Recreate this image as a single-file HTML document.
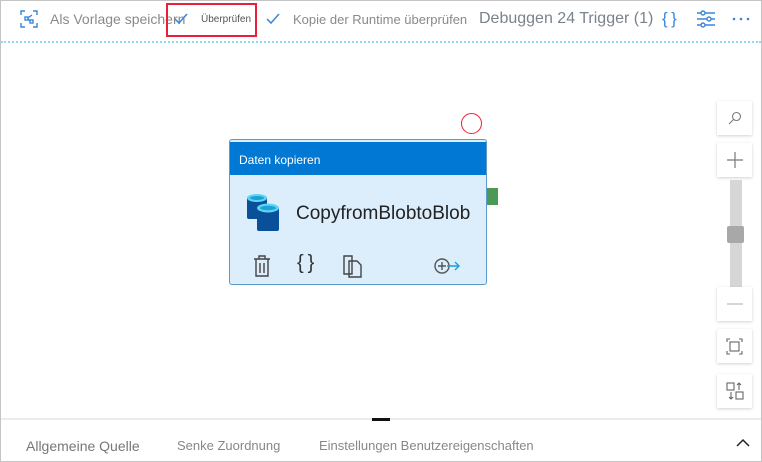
<!DOCTYPE html>
<html><head><style>
*{margin:0;padding:0;box-sizing:border-box}
body{width:762px;height:462px;overflow:hidden;background:#fff;font-family:"Liberation Sans",sans-serif;position:relative}
.frame{position:absolute;inset:0;border:1px solid #c4c4c4}
.a{position:absolute;white-space:nowrap}
.btn{position:absolute;left:717px;width:35px;height:34px;background:#fff;box-shadow:0 1px 3px rgba(0,0,0,.18);display:flex;align-items:center;justify-content:center}
</style></head><body>
<div class="frame"></div>
<!-- toolbar -->
<svg class="a" style="left:20px;top:10px" width="18" height="18" viewBox="0 0 18 18" fill="none" stroke="#3a86d8" stroke-width="1.4"><path d="M1 5V1h4M13 1h4v4M17 13v4h-4M5 17H1v-4"/><rect x="5" y="7" width="3" height="3"/><rect x="10" y="10" width="3" height="3"/><path d="M8 8l4-3M8 9l2 2"/></svg>
<div class="a" style="left:50px;top:11px;font-size:14px;color:#8a8a8a">Als Vorlage speichern</div>
<svg class="a" style="left:173px;top:12px" width="16" height="14" viewBox="0 0 16 14"><path d="M2 7l4 4 8-9" fill="none" stroke="#3a86d8" stroke-width="1.5"/></svg>
<div class="a" style="left:166px;top:3px;width:91px;height:34px;border:2px solid #e8203a"></div>
<div class="a" style="left:201px;top:14px;font-size:10px;color:#555">Überprüfen</div>
<svg class="a" style="left:265px;top:12px" width="16" height="14" viewBox="0 0 16 14"><path d="M2 7l4 4 8-9" fill="none" stroke="#3a86d8" stroke-width="1.5"/></svg>
<div class="a" style="left:293px;top:12px;font-size:13px;color:#8a8a8a">Kopie der Runtime überprüfen</div>
<div class="a" style="left:479px;top:10px;font-size:16px;color:#7a828c">Debuggen 24 Trigger (1)</div>
<div class="a" style="left:662px;top:9px;font-size:17px;color:#3a86d8">{&thinsp;}</div>
<svg class="a" style="left:696px;top:10px" width="20" height="18" viewBox="0 0 20 18" fill="none" stroke="#3a86d8" stroke-width="1.4"><path d="M1 3h18M1 9h18M1 15h18"/><circle cx="7" cy="3" r="2" fill="#fff"/><circle cx="13" cy="9" r="2" fill="#fff"/><circle cx="7" cy="15" r="2" fill="#fff"/></svg>
<svg class="a" style="left:732px;top:17px" width="20" height="4" viewBox="0 0 20 4" fill="#3a86d8"><circle cx="2" cy="2" r="1.3"/><circle cx="9" cy="2" r="1.3"/><circle cx="16" cy="2" r="1.3"/></svg>
<div class="a" style="left:1px;top:41px;width:760px;border-top:2px dotted #8fdcf0"></div>
<!-- node -->
<div class="a" style="left:461px;top:113px;width:21px;height:21px;border:1.5px solid #e8203a;border-radius:50%"></div>
<div class="a" style="left:487px;top:188px;width:11px;height:17px;background:#4a9a55"></div>
<div class="a" style="left:229px;top:139px;width:258px;height:146px;background:#dcedfc;border:1px solid #5a9ac8;border-radius:3px;overflow:hidden">
 <div style="position:absolute;left:0;top:2px;width:100%;height:33px;background:#0078d4;color:#fff;font-size:12px;padding:11px 0 0 9px">Daten kopieren</div>
 <svg style="position:absolute;left:16px;top:53px" width="36" height="40" viewBox="0 0 36 40"><rect x="1" y="4" width="20" height="22" rx="2" fill="#0a4f9a"/><ellipse cx="11" cy="5" rx="10" ry="4" fill="#5bd6f0"/><ellipse cx="11" cy="5" rx="7" ry="2" fill="#1e9fd8"/><rect x="11" y="14" width="22" height="24" rx="2" fill="#0a4f9a"/><ellipse cx="22" cy="15" rx="11" ry="4.5" fill="#5bd6f0"/><ellipse cx="22" cy="15" rx="8" ry="2.2" fill="#1e9fd8"/></svg>
 <div style="position:absolute;left:66px;top:63px;font-size:19px;color:#222">CopyfromBlobtoBlob</div>
 <svg style="position:absolute;left:22px;top:114px" width="20" height="24" viewBox="0 0 20 24" fill="none" stroke="#444" stroke-width="1.4"><path d="M2 5h16M7 5V2h6v3M4 5v17h12V5M8 9v10M12 9v10"/></svg>
 <div style="position:absolute;left:67px;top:112px;font-size:20px;color:#333">{&thinsp;}</div>
 <svg style="position:absolute;left:112px;top:114px" width="22" height="24" viewBox="0 0 22 24" fill="none" stroke="#444" stroke-width="1.4"><path d="M2 2h8v18H2z"/><path d="M7 7h8l4 4v12H7z"/></svg>
 <svg style="position:absolute;left:203px;top:117px" width="28" height="18" viewBox="0 0 28 18" fill="none" stroke-width="1.4"><circle cx="9" cy="9" r="7" stroke="#555"/><path d="M9 5v8M5 9h8" stroke="#555"/><path d="M14 9h12M22 5l4 4-4 4" stroke="#1e9fd8"/></svg>
</div>
<!-- right controls -->
<div class="btn" style="top:101px"><svg width="14" height="14" viewBox="0 0 14 14" fill="none" stroke="#777" stroke-width="1.1"><circle cx="8.5" cy="5.5" r="4"/><path d="M5.5 8.5L1 13"/></svg></div>
<div class="btn" style="top:143px"><svg width="16" height="16" viewBox="0 0 16 16" stroke="#777" stroke-width="1.2"><path d="M8 0v16M0 8h16"/></svg></div>
<div class="a" style="left:730px;top:180px;width:12px;height:108px;background:#d6d6d6"></div>
<div class="a" style="left:727px;top:226px;width:17px;height:17px;background:#a8a8a8;border-radius:2px"></div>
<div class="btn" style="top:287px"><svg width="16" height="4" viewBox="0 0 16 4" stroke="#bbb" stroke-width="1.2"><path d="M0 2h16"/></svg></div>
<div class="btn" style="top:329px"><svg width="17" height="17" viewBox="0 0 17 17" fill="none" stroke="#666" stroke-width="1.1"><path d="M1 4V1h3M13 1h3v3M16 13v3h-3M4 16H1v-3"/><rect x="4" y="4" width="9" height="9"/></svg></div>
<div class="btn" style="top:374px"><svg width="18" height="18" viewBox="0 0 18 18" fill="none" stroke="#666" stroke-width="1.1"><rect x="1" y="1" width="7" height="7"/><rect x="10" y="10" width="7" height="7"/><path d="M13 8V1M11 3l2-2 2 2M5 10v7M3 15l2 2 2-2"/></svg></div>
<!-- bottom -->
<div class="a" style="left:1px;top:418px;width:760px;height:2px;background:#ececec"></div>
<div class="a" style="left:372px;top:418px;width:18px;height:3px;background:#111"></div>
<div class="a" style="left:26px;top:438px;font-size:14px;color:#777">Allgemeine Quelle</div>
<div class="a" style="left:177px;top:438px;font-size:13px;color:#888">Senke Zuordnung</div>
<div class="a" style="left:319px;top:438px;font-size:13px;color:#888">Einstellungen Benutzereigenschaften</div>
<svg class="a" style="left:736px;top:438px" width="14" height="10" viewBox="0 0 14 10" fill="none" stroke="#222" stroke-width="1.5"><path d="M1 8l6-6 6 6"/></svg>
</body></html>
